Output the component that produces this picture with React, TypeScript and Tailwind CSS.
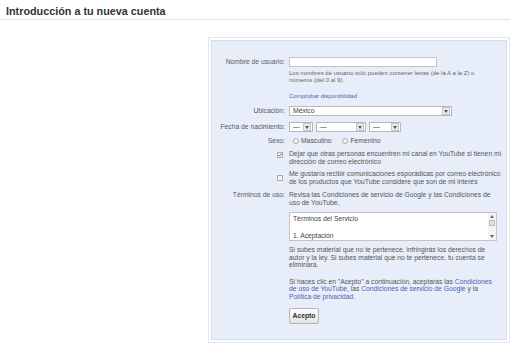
import React from 'react';

const Arrow = () => (
  <span className="mr-[1px] flex h-[8px] w-[8px] items-center justify-center border border-[#c4c4c4] bg-[#ececec]">
    <svg width="4" height="3" viewBox="0 0 4 3">
      <path d="M0 0h4L2 3z" fill="#555" />
    </svg>
  </span>
);

const Select = ({ w, value }: { w: string; value: string }) => (
  <div className={`flex h-[10px] items-center justify-between border border-[#b8b8b8] bg-white ${w}`}>
    <span className="pl-[3px] text-[6.8px] leading-none text-[#444]">{value}</span>
    <Arrow />
  </div>
);

const Radio = ({ label }: { label: string }) => (
  <span className="flex items-center gap-[2px]">
    <span className="h-[6px] w-[6px] rounded-full border border-[#aaa] bg-[#f6f6f6]" />
    <span>{label}</span>
  </span>
);

const Row = ({ label, children, className = '' }: { label?: string; children: React.ReactNode; className?: string }) => (
  <div className={`flex gap-[4px] ${className}`}>
    <div className="w-[73px] shrink-0 text-right text-[#5a5a5a]">{label}</div>
    <div className="flex-1">{children}</div>
  </div>
);

export default function App() {
  return (
    <div className="h-[343px] w-[510px] overflow-hidden bg-white font-['Liberation_Sans',Arial,sans-serif] text-[#555]">
      <h1 className="border-b border-[#e2e2e2] px-[6px] pt-[5px] pb-[2px] text-[10.8px] font-bold leading-[12px] text-[#333]">
        Introducción a tu nueva cuenta
      </h1>

      <div className="flex pt-[17px]">
        <div className="w-[208px] shrink-0" />
        <div className="flex-1 border border-[#e3e8ef] bg-white p-[2px]">
          <div className="h-[300px] border border-[#d3dcea] bg-[#e8eef9] pt-[16px] text-[6.75px] leading-[7.5px]">
            <Row label="Nombre de usuario:" className="items-center">
              <div className="h-[10px] w-[148px] border border-[#c4c4c4] bg-white" />
            </Row>
            <Row className="mt-[3px]">
              <p className="text-[6px] leading-[7px] text-[#666]">
                Los nombres de usuario sólo pueden contener letras (de la A a la Z) o<br />
                números (del 0 al 9).
              </p>
              <p className="mt-[9px] text-[6px] leading-[7px] text-[#4a5fb5]">Comprobar disponibilidad</p>
            </Row>

            <Row label="Ubicación:" className="mt-[6px] items-center">
              <Select w="w-[163px]" value="México" />
            </Row>
            <Row label="Fecha de nacimiento:" className="mt-[6px] items-center">
              <div className="flex gap-[3px]">
                <Select w="w-[24px]" value="—" />
                <Select w="w-[50px]" value="—" />
                <Select w="w-[32px]" value="—" />
              </div>
            </Row>
            <Row label="Sexo:" className="mt-[5px] items-center leading-[8px]">
              <div className="flex gap-[11px] pl-[4px] text-[#555]">
                <Radio label="Masculino" />
                <Radio label="Femenino" />
              </div>
            </Row>

            <Row className="mt-[5px]">
              <div className="relative text-[#555]">
                <span className="absolute top-[2px] left-[-12px] flex h-[6px] w-[6px] items-center justify-center border border-[#aaa] bg-[#f4f4f4]">
                  <svg width="4" height="4" viewBox="0 0 4 4">
                    <path d="M0.5 2l1 1 2-2.5" stroke="#555" strokeWidth="0.8" fill="none" />
                  </svg>
                </span>
                <p>
                  Dejar que otras personas encuentren mi canal en YouTube si tienen mi<br />
                  dirección de correo electrónico
                </p>
              </div>
            </Row>
            <Row className="mt-[5px]">
              <div className="relative text-[#555]">
                <span className="absolute top-[5px] left-[-12px] h-[6px] w-[6px] border border-[#aaa] bg-[#f4f4f4]" />
                <p>
                  Me gustaría recibir comunicaciones esporádicas por correo electrónico<br />
                  de los productos que YouTube considere que son de mi interés
                </p>
              </div>
            </Row>

            <Row label="Términos de uso:" className="mt-[6px]">
              <p>
                Revisa las Condiciones de servicio de Google y las Condiciones de<br />
                uso de YouTube.
              </p>
              <div className="mt-[6px] flex h-[29px] w-[208px] border border-[#c4c4c4] bg-white">
                <div className="flex-1 px-[3px] pt-[2px] text-[#444]">
                  <p>Términos del Servicio</p>
                  <p className="mt-[9px]">1. Aceptación</p>
                </div>
                <div className="flex w-[8px] flex-col items-center bg-[#f3f3f3] py-[2px]">
                  <svg width="4" height="3" viewBox="0 0 4 3"><path d="M0 3h4L2 0z" fill="#666" /></svg>
                  <span className="mt-[2px] h-[6px] w-[6px] border border-[#bbb] bg-[#e2e2e2]" />
                  <span className="flex-1" />
                  <svg width="4" height="3" viewBox="0 0 4 3"><path d="M0 0h4L2 3z" fill="#666" /></svg>
                </div>
              </div>
              <p className="mt-[5px]">
                Si subes material que no te pertenece, infringirás los derechos de<br />
                autor y la ley. Si subes material que no te pertenece, tu cuenta se<br />
                eliminará.
              </p>
              <p className="mt-[9px]">
                Si haces clic en "Acepto" a continuación, aceptarás las <span className="text-[#4a5fb5]">Condiciones</span><br />
                <span className="text-[#4a5fb5]">de uso de YouTube</span>, las <span className="text-[#4a5fb5]">Condiciones de servicio de Google</span> y la<br />
                <span className="text-[#4a5fb5]">Política de privacidad</span>.
              </p>
              <button className="mt-[8px] h-[16px] w-[30px] rounded-[2px] border border-[#b5b5b5] bg-gradient-to-b from-white to-[#e2e4e8] text-[6.75px] font-bold text-[#333]">
                Acepto
              </button>
            </Row>
          </div>
        </div>
      </div>
    </div>
  );
}
